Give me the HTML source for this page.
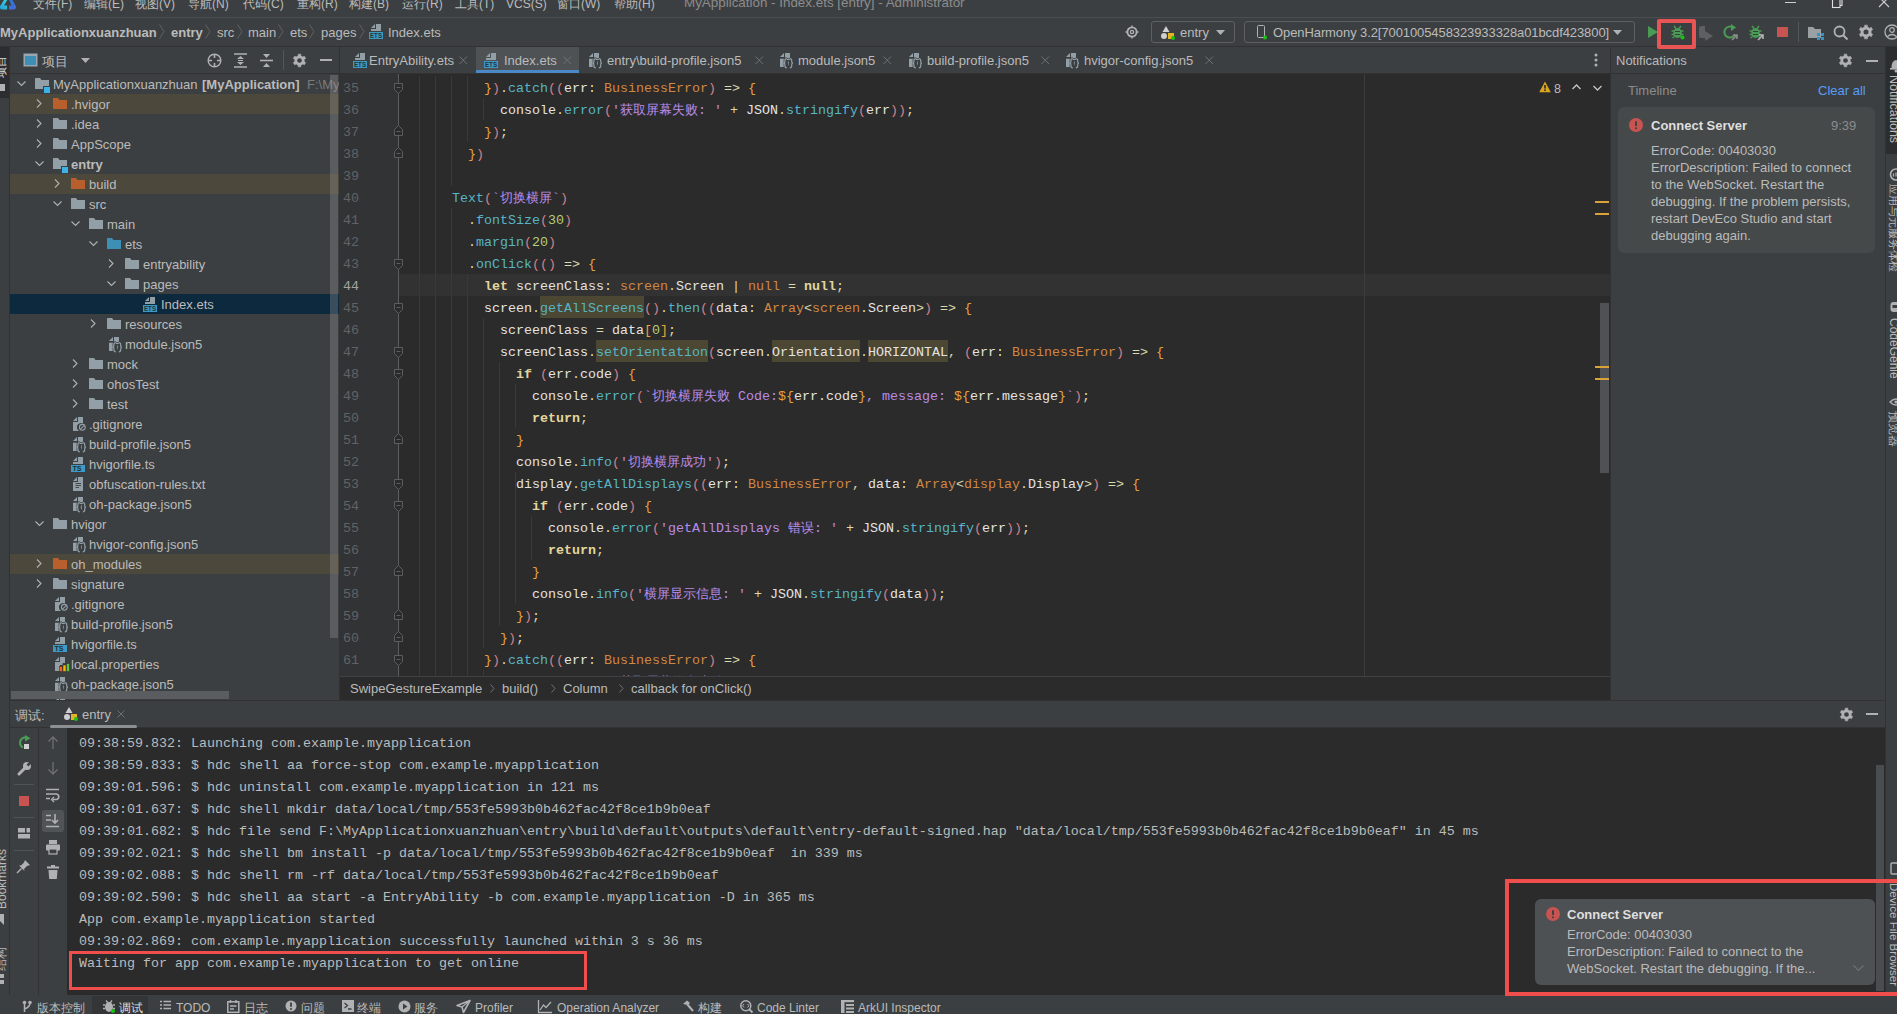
<!DOCTYPE html>
<html><head><meta charset="utf-8"><style>
*{box-sizing:border-box;margin:0;padding:0}
html,body{width:1897px;height:1014px;overflow:hidden;background:#3c3f41;font-family:"Liberation Sans",sans-serif;font-size:13px;color:#bbbbbb}
.a{position:absolute}
.t{position:absolute;white-space:pre;line-height:16px;height:16px}
.m{font-family:"Liberation Mono",monospace;font-size:13.33px}
.cj{display:inline-block;overflow:hidden;white-space:nowrap;vertical-align:top}
svg{position:absolute;overflow:visible}
.id{color:#e3e3e3}.kw{color:#e2d59c;font-weight:bold}.ty{color:#cf8744}.fn{color:#58b4c6}.st{color:#b98be9}.nu{color:#b3ce7a}.br{color:#e8a33c}.pa{color:#d2808c}.op{color:#ded8aa}
.hl{background:#4b4733;padding:5px 0 2px}
</style></head><body>
<div class="a" style="left:0px;top:0px;width:1897px;height:17px;background:#3c3f41"></div>
<div class="a" style="left:0px;top:17px;width:1897px;height:1px;background:#4b4e50"></div>
<div class="a" style="left:0px;top:18px;width:1897px;height:28px;background:#3c3f41"></div>
<div class="a" style="left:0px;top:46px;width:1897px;height:1px;background:#323232"></div>
<div class="a" style="left:0px;top:47px;width:9px;height:948px;background:#3c3f41"></div>
<div class="a" style="left:9px;top:47px;width:1px;height:948px;background:#2f3133"></div>
<div class="a" style="left:10px;top:47px;width:329px;height:653px;background:#3c3f41"></div>
<div class="a" style="left:10px;top:73px;width:329px;height:1px;background:#323232"></div>
<div class="a" style="left:339px;top:47px;width:1px;height:653px;background:#323232"></div>
<div class="a" style="left:340px;top:47px;width:1270px;height:26px;background:#3c3f41"></div>
<div class="a" style="left:340px;top:73px;width:1270px;height:1px;background:#323232"></div>
<div class="a" style="left:340px;top:74px;width:1270px;height:602px;background:#2b2b2b"></div>
<div class="a" style="left:1610px;top:47px;width:1px;height:653px;background:#323232"></div>
<div class="a" style="left:1611px;top:47px;width:274px;height:653px;background:#3c3f41"></div>
<div class="a" style="left:10px;top:700px;width:1875px;height:1px;background:#323232"></div>
<div class="a" style="left:10px;top:701px;width:1875px;height:26px;background:#3c3f41"></div>
<div class="a" style="left:10px;top:727px;width:1875px;height:1px;background:#323232"></div>
<div class="a" style="left:10px;top:728px;width:57px;height:267px;background:#3c3f41"></div>
<div class="a" style="left:67px;top:728px;width:1818px;height:267px;background:#2b2b2b"></div>
<div class="a" style="left:0px;top:995px;width:1897px;height:19px;background:#3c3f41"></div>
<div class="t" style="left:33px;top:-4px;color:#bbbbbb;font-size:12px">文件(F)</div>
<div class="t" style="left:84px;top:-4px;color:#bbbbbb;font-size:12px">编辑(E)</div>
<div class="t" style="left:135px;top:-4px;color:#bbbbbb;font-size:12px">视图(V)</div>
<div class="t" style="left:188px;top:-4px;color:#bbbbbb;font-size:12px">导航(N)</div>
<div class="t" style="left:243px;top:-4px;color:#bbbbbb;font-size:12px">代码(C)</div>
<div class="t" style="left:297px;top:-4px;color:#bbbbbb;font-size:12px">重构(R)</div>
<div class="t" style="left:349px;top:-4px;color:#bbbbbb;font-size:12px">构建(B)</div>
<div class="t" style="left:402px;top:-4px;color:#bbbbbb;font-size:12px">运行(R)</div>
<div class="t" style="left:455px;top:-4px;color:#bbbbbb;font-size:12px">工具(T)</div>
<div class="t" style="left:506px;top:-4px;color:#bbbbbb;font-size:12px">VCS(S)</div>
<div class="t" style="left:557px;top:-4px;color:#bbbbbb;font-size:12px">窗口(W)</div>
<div class="t" style="left:614px;top:-4px;color:#bbbbbb;font-size:12px">帮助(H)</div>
<div class="t" style="left:684px;top:-5px;color:#8c8c8c;font-size:13.4px">MyApplication - Index.ets [entry] - Administrator</div>
<svg style="left:0px;top:0px;" width="18" height="12" viewBox="0 0 18 12"><defs><linearGradient id="lg1" x1="0" y1="1" x2="0.6" y2="0"><stop offset="0" stop-color="#1ea0d8"/><stop offset="1" stop-color="#3ccbe0"/></linearGradient><linearGradient id="lg2" x1="0" y1="0" x2="1" y2="1"><stop offset="0" stop-color="#2a78d0"/><stop offset="1" stop-color="#4a68d8"/></linearGradient></defs><path d="M-0.5 7 L4.6 -1 H7.8 L4.1 5.6 H7.1 V9.6 H2 Q0.3 9.6 -0.5 7 Z" fill="url(#lg1)"/><path d="M8.7 -1 H11.8 L15.9 6.3 Q16.3 8.2 15.2 9 Q14.6 9.6 13.6 9.6 H9 V5.6 H11.6 Z" fill="url(#lg2)"/></svg>
<div class="a" style="left:1785px;top:2px;width:11px;height:1px;background:#cfcfcf"></div>
<svg style="left:1830px;top:-3px;" width="14" height="12" viewBox="0 0 14 12"><rect x="2.5" y="1.5" width="7.5" height="9" fill="none" stroke="#e0e0e0" stroke-width="1.1"/><path d="M4.5 1.5 V-0.5 H12 V8.5 H10" fill="none" stroke="#e0e0e0" stroke-width="1.1"/></svg>
<svg style="left:1878px;top:-3px;" width="14" height="12" viewBox="0 0 14 12"><path d="M1 0 L11 10 M11 0 L1 10" stroke="#cfcfcf" stroke-width="1.1"/></svg>
<div class="t" style="left:0px;top:25px;font-weight:bold;color:#bbbbbb">MyApplicationxuanzhuan</div>
<div class="t" style="left:171px;top:25px;font-weight:bold;color:#bbbbbb">entry</div>
<div class="t" style="left:217px;top:25px;color:#bbbbbb">src</div>
<div class="t" style="left:248px;top:25px;color:#bbbbbb">main</div>
<div class="t" style="left:290px;top:25px;color:#bbbbbb">ets</div>
<div class="t" style="left:321px;top:25px;color:#bbbbbb">pages</div>
<div class="t" style="left:388px;top:25px;color:#bbbbbb">Index.ets</div>
<svg style="left:159px;top:24px;" width="6" height="16" viewBox="0 0 6 16"><path d="M0.5 0.5 L5 7.5 L0.5 14.5" stroke="#5f6163" fill="none"/></svg>
<svg style="left:205px;top:24px;" width="6" height="16" viewBox="0 0 6 16"><path d="M0.5 0.5 L5 7.5 L0.5 14.5" stroke="#5f6163" fill="none"/></svg>
<svg style="left:237px;top:24px;" width="6" height="16" viewBox="0 0 6 16"><path d="M0.5 0.5 L5 7.5 L0.5 14.5" stroke="#5f6163" fill="none"/></svg>
<svg style="left:278px;top:24px;" width="6" height="16" viewBox="0 0 6 16"><path d="M0.5 0.5 L5 7.5 L0.5 14.5" stroke="#5f6163" fill="none"/></svg>
<svg style="left:309px;top:24px;" width="6" height="16" viewBox="0 0 6 16"><path d="M0.5 0.5 L5 7.5 L0.5 14.5" stroke="#5f6163" fill="none"/></svg>
<svg style="left:359px;top:24px;" width="6" height="16" viewBox="0 0 6 16"><path d="M0.5 0.5 L5 7.5 L0.5 14.5" stroke="#5f6163" fill="none"/></svg>
<svg style="left:371px;top:24px;" width="14" height="16" viewBox="0 0 14 16"><path d="M0 4 L4 0 V4 Z" fill="#929fa7"/><path d="M5 0 H10 V7 H0 V5 H5 Z" fill="#929fa7"/><rect x="-2" y="8" width="14" height="7" fill="#3d9ac4"/><text x="5" y="14" font-family="Liberation Sans" font-size="6.5" font-weight="bold" fill="#25323a" text-anchor="middle" textLength="12" lengthAdjust="spacingAndGlyphs">ETS</text></svg>
<svg style="left:1125px;top:25px;" width="15" height="15" viewBox="0 0 15 15"><circle cx="7" cy="7" r="4.6" fill="none" stroke="#afb1b3" stroke-width="1.8"/><circle cx="7" cy="7" r="1.6" fill="none" stroke="#afb1b3" stroke-width="1.3"/><path d="M7 0.5 V2.5 M7 11.5 V13.5 M0.5 7 H2.5 M11.5 7 H13.5" stroke="#afb1b3" stroke-width="1.4"/></svg>
<div class="a" style="left:1151px;top:21px;width:84px;height:22px;border:1px solid #5e6060;border-radius:3px"></div>
<svg style="left:1160px;top:25px;" width="18" height="16" viewBox="0 0 18 16"><path d="M6 1 L9.5 7 H2.5 Z" fill="#cfcfcf"/><circle cx="4" cy="11" r="3" fill="#cfcfcf"/><rect x="8" y="8" width="6" height="6" fill="#e6b422"/><circle cx="13" cy="13" r="2" fill="#16c60c"/></svg>
<div class="t" style="left:1180px;top:25px;color:#bbbbbb">entry</div>
<svg style="left:1216px;top:30px;" width="10" height="6" viewBox="0 0 10 6"><path d="M0 0 H9 L4.5 5 Z" fill="#afb1b3"/></svg>
<div class="a" style="left:1244px;top:21px;width:391px;height:22px;border:1px solid #5e6060;border-radius:3px"></div>
<svg style="left:1256px;top:25px;" width="12" height="15" viewBox="0 0 12 15"><rect x="1.5" y="0.5" width="7" height="12" rx="1" fill="none" stroke="#afb1b3"/><circle cx="9" cy="12.5" r="2" fill="#16c60c"/></svg>
<div class="t" style="left:1273px;top:25px;color:#bbbbbb;letter-spacing:-0.09px">OpenHarmony 3.2[7001005458323933328a01bcdf423800]</div>
<svg style="left:1613px;top:30px;" width="10" height="6" viewBox="0 0 10 6"><path d="M0 0 H9 L4.5 5 Z" fill="#afb1b3"/></svg>
<svg style="left:1647px;top:25px;" width="12" height="14" viewBox="0 0 12 14"><path d="M1 1 L11 7 L1 13 Z" fill="#499c54"/></svg>
<div class="a" style="left:1657px;top:19px;width:39px;height:30px;border:4px solid #e95454;border-radius:2px"></div>
<svg style="left:1671px;top:25px;" width="16" height="16" viewBox="0 0 16 16"><ellipse cx="6.5" cy="8" rx="4.3" ry="5" fill="#499c54"/><path d="M3 1 L5 3.5 M10 1 L8 3.5 M0.5 6 H3 M0.5 9.5 H3 M10 6 H12.5 M10 9.5 H12.5 M1.5 13 L3.5 11.5 M11.5 13 L9.5 11.5" stroke="#499c54" stroke-width="1.4"/><path d="M4 6.5 H9 M4 9.5 H9" stroke="#3c3f41" stroke-width="1"/><circle cx="11.5" cy="12.5" r="2" fill="#16c60c"/></svg>
<svg style="left:1697px;top:25px;" width="17" height="16" viewBox="0 0 17 16"><path d="M2 3 Q2 1 5 1 H8 V13 H5 Q2 13 2 11 Z" fill="#5d5f61"/><path d="M8 6 L16 11 L8 16 Z" fill="#5d5f61"/></svg>
<svg style="left:1722px;top:24px;" width="17" height="17" viewBox="0 0 17 17"><path d="M11 3.5 A5.5 5.5 0 1 0 12.5 11" fill="none" stroke="#499c54" stroke-width="2"/><path d="M9 0 L14 3.5 L9 7 Z" fill="#499c54"/><path d="M10 16 L15 11 M11 11 H15 V15" stroke="#8c8c8c" stroke-width="1.6" fill="none"/></svg>
<svg style="left:1749px;top:25px;" width="16" height="16" viewBox="0 0 16 16"><ellipse cx="6.5" cy="8" rx="4.3" ry="5" fill="#499c54"/><path d="M3 1 L5 3.5 M10 1 L8 3.5 M0.5 6 H3 M0.5 9.5 H3 M10 6 H12.5 M10 9.5 H12.5 M1.5 13 L3.5 11.5 M11.5 13 L9.5 11.5" stroke="#499c54" stroke-width="1.4"/><path d="M4 6.5 H9 M4 9.5 H9" stroke="#3c3f41" stroke-width="1"/><path d="M9 15 L14 10 M10 10 H14 V14" stroke="#afb1b3" stroke-width="1.6" fill="none"/></svg>
<div class="a" style="left:1777px;top:27px;width:11px;height:10px;background:#c75450"></div>
<div class="a" style="left:1798px;top:22px;width:1px;height:20px;background:#555759"></div>
<svg style="left:1807px;top:25px;" width="17" height="15" viewBox="0 0 17 15"><path d="M1 2 H6 L8 4 H14 V13 H1 Z" fill="#9aa0a4"/><rect x="10" y="8" width="3" height="3" fill="#3592c4"/><rect x="14" y="8" width="3" height="3" fill="#3592c4"/><rect x="10" y="12" width="3" height="3" fill="#3592c4"/><rect x="14" y="12" width="3" height="3" fill="#3592c4"/></svg>
<svg style="left:1833px;top:25px;" width="16" height="16" viewBox="0 0 16 16"><circle cx="6.5" cy="6.5" r="5" fill="none" stroke="#afb1b3" stroke-width="1.8"/><path d="M10 10 L14.5 14.5" stroke="#afb1b3" stroke-width="2"/></svg>
<svg style="left:1859px;top:25px;" width="14" height="14" viewBox="0 0 14 14"><polygon points="4.43,2.50 5.62,2.01 5.61,0.14 8.39,0.14 8.38,2.01 9.61,2.52 10.63,3.31 12.25,2.37 13.64,4.77 12.01,5.70 12.18,7.02 12.01,8.30 13.64,9.23 12.25,11.63 10.63,10.69 9.57,11.50 8.38,11.99 8.39,13.86 5.61,13.86 5.62,11.99 4.39,11.48 3.37,10.69 1.75,11.63 0.36,9.23 1.99,8.30 1.82,6.98 1.99,5.70 0.36,4.77 1.75,2.37 3.37,3.31" fill="#afb1b3" stroke="#afb1b3" stroke-width="0.6" stroke-linejoin="round"/><circle cx="7.0" cy="7.0" r="2.52" fill="#3c3f41"/></svg>
<svg style="left:1884px;top:24px;" width="16" height="16" viewBox="0 0 16 16"><circle cx="8" cy="8" r="7" fill="none" stroke="#afb1b3" stroke-width="1.3"/><circle cx="8" cy="6" r="2.3" fill="none" stroke="#afb1b3" stroke-width="1.2"/><path d="M3.5 12.5 Q8 8.5 12.5 12.5" fill="none" stroke="#afb1b3" stroke-width="1.2"/></svg>
<svg style="left:23px;top:53px;" width="15" height="14" viewBox="0 0 15 14"><rect x="0.5" y="0.5" width="14" height="13" fill="#9aa7b0"/><rect x="2" y="3" width="11" height="9" fill="#3d8fb5"/></svg>
<div class="t" style="left:42px;top:54px;color:#bbbbbb">项目</div>
<svg style="left:81px;top:58px;" width="10" height="6" viewBox="0 0 10 6"><path d="M0 0 H9 L4.5 5 Z" fill="#afb1b3"/></svg>
<svg style="left:207px;top:53px;" width="15" height="15" viewBox="0 0 15 15"><circle cx="7.5" cy="7.5" r="6.3" fill="none" stroke="#afb1b3" stroke-width="1.4"/><path d="M7.5 1 V5 M7.5 10 V14 M1 7.5 H5 M10 7.5 H14" stroke="#afb1b3" stroke-width="1.6"/></svg>
<svg style="left:234px;top:53px;" width="13" height="15" viewBox="0 0 13 15"><path d="M0 1 H13 M0 14 H13" stroke="#afb1b3" stroke-width="1.6"/><path d="M3 6 L6.5 3 L10 6 Z M3 9 L6.5 12 L10 9 Z" fill="#afb1b3"/><path d="M4 7.5 H9" stroke="#afb1b3"/></svg>
<svg style="left:260px;top:53px;" width="13" height="15" viewBox="0 0 13 15"><path d="M0 7.5 H13" stroke="#afb1b3" stroke-width="1.6"/><path d="M3 1 L6.5 5 L10 1 Z M3 14 L6.5 10 L10 14 Z" fill="#afb1b3"/></svg>
<div class="a" style="left:283px;top:50px;width:1px;height:20px;background:#555759"></div>
<svg style="left:293px;top:54px;" width="13" height="13" viewBox="0 0 13 13"><polygon points="4.11,2.33 5.22,1.86 5.21,0.13 7.79,0.13 7.78,1.86 8.92,2.34 9.87,3.07 11.37,2.20 12.66,4.43 11.16,5.29 11.31,6.52 11.16,7.71 12.66,8.57 11.37,10.80 9.87,9.93 8.89,10.67 7.78,11.14 7.79,12.87 5.21,12.87 5.22,11.14 4.08,10.66 3.13,9.93 1.63,10.80 0.34,8.57 1.84,7.71 1.69,6.48 1.84,5.29 0.34,4.43 1.63,2.20 3.13,3.07" fill="#afb1b3" stroke="#afb1b3" stroke-width="0.6" stroke-linejoin="round"/><circle cx="6.5" cy="6.5" r="2.34" fill="#3c3f41"/></svg>
<div class="a" style="left:320px;top:59px;width:12px;height:2px;background:#afb1b3"></div>
<div class="a" style="left:0;top:0;width:339px;height:700px;overflow:hidden">
<svg style="left:17px;top:79px;" width="10" height="10" viewBox="0 0 10 10"><path d="M0.5 2.5 L4.5 6.5 L8.5 2.5" fill="none" stroke="#afb1b3" stroke-width="1.1"/></svg>
<svg style="left:35px;top:78px;" width="16" height="16" viewBox="0 0 16 16"><path d="M0 0.5 Q0 0 0.5 0 H5 L6.5 2 H14 V8 H8 V11 H0 Z" fill="#929fa7"/><rect x="9" y="9" width="6" height="6" fill="#3cb2e6"/></svg>
<div class="t" style="left:53px;top:77px;color:#bbbbbb">MyApplicationxuanzhuan</div>
<div class="t" style="left:202px;top:77px;color:#bbbbbb;font-weight:bold">[MyApplication]</div>
<div class="t" style="left:307px;top:77px;color:#7b7b7b">F:\MyApplicationxuanzhuan</div>
<div class="a" style="left:10px;top:94px;width:329px;height:20px;background:#4d483c"></div>
<svg style="left:35px;top:99px;" width="10" height="10" viewBox="0 0 10 10"><path d="M2 0.5 L6 4.5 L2 8.5" fill="none" stroke="#afb1b3" stroke-width="1.1"/></svg>
<svg style="left:53px;top:98px;" width="16" height="16" viewBox="0 0 16 16"><path d="M0 0.5 Q0 0 0.5 0 H5 L6.5 2 H14 V11 H0 Z" fill="#b95f2e"/></svg>
<div class="t" style="left:71px;top:97px;color:#bbbbbb">.hvigor</div>
<svg style="left:35px;top:119px;" width="10" height="10" viewBox="0 0 10 10"><path d="M2 0.5 L6 4.5 L2 8.5" fill="none" stroke="#afb1b3" stroke-width="1.1"/></svg>
<svg style="left:53px;top:118px;" width="16" height="16" viewBox="0 0 16 16"><path d="M0 0.5 Q0 0 0.5 0 H5 L6.5 2 H14 V11 H0 Z" fill="#929fa7"/></svg>
<div class="t" style="left:71px;top:117px;color:#bbbbbb">.idea</div>
<svg style="left:35px;top:139px;" width="10" height="10" viewBox="0 0 10 10"><path d="M2 0.5 L6 4.5 L2 8.5" fill="none" stroke="#afb1b3" stroke-width="1.1"/></svg>
<svg style="left:53px;top:138px;" width="16" height="16" viewBox="0 0 16 16"><path d="M0 0.5 Q0 0 0.5 0 H5 L6.5 2 H14 V11 H0 Z" fill="#929fa7"/></svg>
<div class="t" style="left:71px;top:137px;color:#bbbbbb">AppScope</div>
<svg style="left:35px;top:159px;" width="10" height="10" viewBox="0 0 10 10"><path d="M0.5 2.5 L4.5 6.5 L8.5 2.5" fill="none" stroke="#afb1b3" stroke-width="1.1"/></svg>
<svg style="left:53px;top:158px;" width="16" height="16" viewBox="0 0 16 16"><path d="M0 0.5 Q0 0 0.5 0 H5 L6.5 2 H14 V8 H8 V11 H0 Z" fill="#929fa7"/><rect x="9" y="9" width="6" height="6" fill="#3cb2e6"/></svg>
<div class="t" style="left:71px;top:157px;color:#bbbbbb;font-weight:bold">entry</div>
<div class="a" style="left:10px;top:174px;width:329px;height:20px;background:#4d483c"></div>
<svg style="left:53px;top:179px;" width="10" height="10" viewBox="0 0 10 10"><path d="M2 0.5 L6 4.5 L2 8.5" fill="none" stroke="#afb1b3" stroke-width="1.1"/></svg>
<svg style="left:71px;top:178px;" width="16" height="16" viewBox="0 0 16 16"><path d="M0 0.5 Q0 0 0.5 0 H5 L6.5 2 H14 V11 H0 Z" fill="#b95f2e"/></svg>
<div class="t" style="left:89px;top:177px;color:#bbbbbb">build</div>
<svg style="left:53px;top:199px;" width="10" height="10" viewBox="0 0 10 10"><path d="M0.5 2.5 L4.5 6.5 L8.5 2.5" fill="none" stroke="#afb1b3" stroke-width="1.1"/></svg>
<svg style="left:71px;top:198px;" width="16" height="16" viewBox="0 0 16 16"><path d="M0 0.5 Q0 0 0.5 0 H5 L6.5 2 H14 V11 H0 Z" fill="#929fa7"/></svg>
<div class="t" style="left:89px;top:197px;color:#bbbbbb">src</div>
<svg style="left:71px;top:219px;" width="10" height="10" viewBox="0 0 10 10"><path d="M0.5 2.5 L4.5 6.5 L8.5 2.5" fill="none" stroke="#afb1b3" stroke-width="1.1"/></svg>
<svg style="left:89px;top:218px;" width="16" height="16" viewBox="0 0 16 16"><path d="M0 0.5 Q0 0 0.5 0 H5 L6.5 2 H14 V11 H0 Z" fill="#929fa7"/></svg>
<div class="t" style="left:107px;top:217px;color:#bbbbbb">main</div>
<svg style="left:89px;top:239px;" width="10" height="10" viewBox="0 0 10 10"><path d="M0.5 2.5 L4.5 6.5 L8.5 2.5" fill="none" stroke="#afb1b3" stroke-width="1.1"/></svg>
<svg style="left:107px;top:238px;" width="16" height="16" viewBox="0 0 16 16"><path d="M0 0.5 Q0 0 0.5 0 H5 L6.5 2 H14 V11 H0 Z" fill="#3d8fb5"/></svg>
<div class="t" style="left:125px;top:237px;color:#bbbbbb">ets</div>
<svg style="left:107px;top:259px;" width="10" height="10" viewBox="0 0 10 10"><path d="M2 0.5 L6 4.5 L2 8.5" fill="none" stroke="#afb1b3" stroke-width="1.1"/></svg>
<svg style="left:125px;top:258px;" width="16" height="16" viewBox="0 0 16 16"><path d="M0 0.5 Q0 0 0.5 0 H5 L6.5 2 H14 V11 H0 Z" fill="#929fa7"/></svg>
<div class="t" style="left:143px;top:257px;color:#bbbbbb">entryability</div>
<svg style="left:107px;top:279px;" width="10" height="10" viewBox="0 0 10 10"><path d="M0.5 2.5 L4.5 6.5 L8.5 2.5" fill="none" stroke="#afb1b3" stroke-width="1.1"/></svg>
<svg style="left:125px;top:278px;" width="16" height="16" viewBox="0 0 16 16"><path d="M0 0.5 Q0 0 0.5 0 H5 L6.5 2 H14 V11 H0 Z" fill="#929fa7"/></svg>
<div class="t" style="left:143px;top:277px;color:#bbbbbb">pages</div>
<div class="a" style="left:10px;top:294px;width:329px;height:20px;background:#0d293e"></div>
<svg style="left:145px;top:297px;" width="14" height="16" viewBox="0 0 14 16"><path d="M0 4 L4 0 V4 Z" fill="#929fa7"/><path d="M5 0 H10 V7 H0 V5 H5 Z" fill="#929fa7"/><rect x="-2" y="8" width="14" height="7" fill="#3d9ac4"/><text x="5" y="14" font-family="Liberation Sans" font-size="6.5" font-weight="bold" fill="#25323a" text-anchor="middle" textLength="12" lengthAdjust="spacingAndGlyphs">ETS</text></svg>
<div class="t" style="left:161px;top:297px;color:#bbbbbb">Index.ets</div>
<svg style="left:89px;top:319px;" width="10" height="10" viewBox="0 0 10 10"><path d="M2 0.5 L6 4.5 L2 8.5" fill="none" stroke="#afb1b3" stroke-width="1.1"/></svg>
<svg style="left:107px;top:318px;" width="16" height="16" viewBox="0 0 16 16"><path d="M0 0.5 Q0 0 0.5 0 H5 L6.5 2 H14 V11 H0 Z" fill="#929fa7"/></svg>
<div class="t" style="left:125px;top:317px;color:#bbbbbb">resources</div>
<svg style="left:109px;top:337px;" width="14" height="16" viewBox="0 0 14 16"><path d="M0 4 L4 0 V4 Z" fill="#929fa7"/><path d="M5 0 H10 V5 H5 Z M0 5.8 H10 V14 H0 Z" fill="#929fa7"/><path d="M6.8 5.6 Q4.9 5.6 4.9 7.6 V8.7 Q4.9 10.2 3.6 10.2 Q4.9 10.2 4.9 11.7 V12.8 Q4.9 14.8 6.8 14.8 M9.8 5.6 Q11.7 5.6 11.7 7.6 V8.7 Q11.7 10.2 13 10.2 Q11.7 10.2 11.7 11.7 V12.8 Q11.7 14.8 9.8 14.8 M3.6 10.2 H5" fill="none" stroke="#3c3f41" stroke-width="2.6"/><path d="M6 7 H10.6 V14 H6 Z" fill="#3c3f41"/><path d="M6.8 5.6 Q4.9 5.6 4.9 7.6 V8.7 Q4.9 10.2 3.6 10.2 Q4.9 10.2 4.9 11.7 V12.8 Q4.9 14.8 6.8 14.8 M9.8 5.6 Q11.7 5.6 11.7 7.6 V8.7 Q11.7 10.2 13 10.2 Q11.7 10.2 11.7 11.7 V12.8 Q11.7 14.8 9.8 14.8" fill="none" stroke="#929fa7" stroke-width="1.2"/><path d="M8.3 7.2 Q7.3 10.2 8.3 13.2 Q9.3 10.2 8.3 7.2 Z" fill="#929fa7"/></svg>
<div class="t" style="left:125px;top:337px;color:#bbbbbb">module.json5</div>
<svg style="left:71px;top:359px;" width="10" height="10" viewBox="0 0 10 10"><path d="M2 0.5 L6 4.5 L2 8.5" fill="none" stroke="#afb1b3" stroke-width="1.1"/></svg>
<svg style="left:89px;top:358px;" width="16" height="16" viewBox="0 0 16 16"><path d="M0 0.5 Q0 0 0.5 0 H5 L6.5 2 H14 V11 H0 Z" fill="#929fa7"/></svg>
<div class="t" style="left:107px;top:357px;color:#bbbbbb">mock</div>
<svg style="left:71px;top:379px;" width="10" height="10" viewBox="0 0 10 10"><path d="M2 0.5 L6 4.5 L2 8.5" fill="none" stroke="#afb1b3" stroke-width="1.1"/></svg>
<svg style="left:89px;top:378px;" width="16" height="16" viewBox="0 0 16 16"><path d="M0 0.5 Q0 0 0.5 0 H5 L6.5 2 H14 V11 H0 Z" fill="#929fa7"/></svg>
<div class="t" style="left:107px;top:377px;color:#bbbbbb">ohosTest</div>
<svg style="left:71px;top:399px;" width="10" height="10" viewBox="0 0 10 10"><path d="M2 0.5 L6 4.5 L2 8.5" fill="none" stroke="#afb1b3" stroke-width="1.1"/></svg>
<svg style="left:89px;top:398px;" width="16" height="16" viewBox="0 0 16 16"><path d="M0 0.5 Q0 0 0.5 0 H5 L6.5 2 H14 V11 H0 Z" fill="#929fa7"/></svg>
<div class="t" style="left:107px;top:397px;color:#bbbbbb">test</div>
<svg style="left:73px;top:417px;" width="14" height="16" viewBox="0 0 14 16"><path d="M0 4 L4 0 V4 Z" fill="#929fa7"/><path d="M5 0 H10 V6.5 A3.6 3.6 0 0 0 6.2 14 H0 V5 H5 Z" fill="#929fa7"/><circle cx="9.3" cy="10.3" r="2.9" fill="none" stroke="#929fa7" stroke-width="1.1"/><path d="M7.3 12.3 L11.3 8.3" stroke="#929fa7" stroke-width="1.1"/></svg>
<div class="t" style="left:89px;top:417px;color:#bbbbbb">.gitignore</div>
<svg style="left:73px;top:437px;" width="14" height="16" viewBox="0 0 14 16"><path d="M0 4 L4 0 V4 Z" fill="#929fa7"/><path d="M5 0 H10 V5 H5 Z M0 5.8 H10 V14 H0 Z" fill="#929fa7"/><path d="M6.8 5.6 Q4.9 5.6 4.9 7.6 V8.7 Q4.9 10.2 3.6 10.2 Q4.9 10.2 4.9 11.7 V12.8 Q4.9 14.8 6.8 14.8 M9.8 5.6 Q11.7 5.6 11.7 7.6 V8.7 Q11.7 10.2 13 10.2 Q11.7 10.2 11.7 11.7 V12.8 Q11.7 14.8 9.8 14.8 M3.6 10.2 H5" fill="none" stroke="#3c3f41" stroke-width="2.6"/><path d="M6 7 H10.6 V14 H6 Z" fill="#3c3f41"/><path d="M6.8 5.6 Q4.9 5.6 4.9 7.6 V8.7 Q4.9 10.2 3.6 10.2 Q4.9 10.2 4.9 11.7 V12.8 Q4.9 14.8 6.8 14.8 M9.8 5.6 Q11.7 5.6 11.7 7.6 V8.7 Q11.7 10.2 13 10.2 Q11.7 10.2 11.7 11.7 V12.8 Q11.7 14.8 9.8 14.8" fill="none" stroke="#929fa7" stroke-width="1.2"/><path d="M8.3 7.2 Q7.3 10.2 8.3 13.2 Q9.3 10.2 8.3 7.2 Z" fill="#929fa7"/></svg>
<div class="t" style="left:89px;top:437px;color:#bbbbbb">build-profile.json5</div>
<svg style="left:73px;top:457px;" width="14" height="16" viewBox="0 0 14 16"><path d="M0 4 L4 0 V4 Z" fill="#929fa7"/><path d="M5 0 H10 V7 H0 V5 H5 Z" fill="#929fa7"/><rect x="-2" y="8" width="14" height="7" fill="#3d9ac4"/><text x="-0.5" y="14" font-family="Liberation Sans" font-size="7" font-weight="bold" fill="#1f2f38">TS</text></svg>
<div class="t" style="left:89px;top:457px;color:#bbbbbb">hvigorfile.ts</div>
<svg style="left:73px;top:477px;" width="14" height="16" viewBox="0 0 14 16"><path d="M0 4 L4 0 V4 Z" fill="#929fa7"/><path d="M5 0 H10 V14 H0 V5 H5 Z" fill="#929fa7"/><path d="M2.5 6.5 H8 M2.5 8.5 H8 M2.5 10.5 H6" stroke="#3c3f41" stroke-width="0.9"/></svg>
<div class="t" style="left:89px;top:477px;color:#bbbbbb">obfuscation-rules.txt</div>
<svg style="left:73px;top:497px;" width="14" height="16" viewBox="0 0 14 16"><path d="M0 4 L4 0 V4 Z" fill="#929fa7"/><path d="M5 0 H10 V5 H5 Z M0 5.8 H10 V14 H0 Z" fill="#929fa7"/><path d="M6.8 5.6 Q4.9 5.6 4.9 7.6 V8.7 Q4.9 10.2 3.6 10.2 Q4.9 10.2 4.9 11.7 V12.8 Q4.9 14.8 6.8 14.8 M9.8 5.6 Q11.7 5.6 11.7 7.6 V8.7 Q11.7 10.2 13 10.2 Q11.7 10.2 11.7 11.7 V12.8 Q11.7 14.8 9.8 14.8 M3.6 10.2 H5" fill="none" stroke="#3c3f41" stroke-width="2.6"/><path d="M6 7 H10.6 V14 H6 Z" fill="#3c3f41"/><path d="M6.8 5.6 Q4.9 5.6 4.9 7.6 V8.7 Q4.9 10.2 3.6 10.2 Q4.9 10.2 4.9 11.7 V12.8 Q4.9 14.8 6.8 14.8 M9.8 5.6 Q11.7 5.6 11.7 7.6 V8.7 Q11.7 10.2 13 10.2 Q11.7 10.2 11.7 11.7 V12.8 Q11.7 14.8 9.8 14.8" fill="none" stroke="#929fa7" stroke-width="1.2"/><path d="M8.3 7.2 Q7.3 10.2 8.3 13.2 Q9.3 10.2 8.3 7.2 Z" fill="#929fa7"/></svg>
<div class="t" style="left:89px;top:497px;color:#bbbbbb">oh-package.json5</div>
<svg style="left:35px;top:519px;" width="10" height="10" viewBox="0 0 10 10"><path d="M0.5 2.5 L4.5 6.5 L8.5 2.5" fill="none" stroke="#afb1b3" stroke-width="1.1"/></svg>
<svg style="left:53px;top:518px;" width="16" height="16" viewBox="0 0 16 16"><path d="M0 0.5 Q0 0 0.5 0 H5 L6.5 2 H14 V11 H0 Z" fill="#929fa7"/></svg>
<div class="t" style="left:71px;top:517px;color:#bbbbbb">hvigor</div>
<svg style="left:73px;top:537px;" width="14" height="16" viewBox="0 0 14 16"><path d="M0 4 L4 0 V4 Z" fill="#929fa7"/><path d="M5 0 H10 V5 H5 Z M0 5.8 H10 V14 H0 Z" fill="#929fa7"/><path d="M6.8 5.6 Q4.9 5.6 4.9 7.6 V8.7 Q4.9 10.2 3.6 10.2 Q4.9 10.2 4.9 11.7 V12.8 Q4.9 14.8 6.8 14.8 M9.8 5.6 Q11.7 5.6 11.7 7.6 V8.7 Q11.7 10.2 13 10.2 Q11.7 10.2 11.7 11.7 V12.8 Q11.7 14.8 9.8 14.8 M3.6 10.2 H5" fill="none" stroke="#3c3f41" stroke-width="2.6"/><path d="M6 7 H10.6 V14 H6 Z" fill="#3c3f41"/><path d="M6.8 5.6 Q4.9 5.6 4.9 7.6 V8.7 Q4.9 10.2 3.6 10.2 Q4.9 10.2 4.9 11.7 V12.8 Q4.9 14.8 6.8 14.8 M9.8 5.6 Q11.7 5.6 11.7 7.6 V8.7 Q11.7 10.2 13 10.2 Q11.7 10.2 11.7 11.7 V12.8 Q11.7 14.8 9.8 14.8" fill="none" stroke="#929fa7" stroke-width="1.2"/><path d="M8.3 7.2 Q7.3 10.2 8.3 13.2 Q9.3 10.2 8.3 7.2 Z" fill="#929fa7"/></svg>
<div class="t" style="left:89px;top:537px;color:#bbbbbb">hvigor-config.json5</div>
<div class="a" style="left:10px;top:554px;width:329px;height:20px;background:#4d483c"></div>
<svg style="left:35px;top:559px;" width="10" height="10" viewBox="0 0 10 10"><path d="M2 0.5 L6 4.5 L2 8.5" fill="none" stroke="#afb1b3" stroke-width="1.1"/></svg>
<svg style="left:53px;top:558px;" width="16" height="16" viewBox="0 0 16 16"><path d="M0 0.5 Q0 0 0.5 0 H5 L6.5 2 H14 V11 H0 Z" fill="#b95f2e"/></svg>
<div class="t" style="left:71px;top:557px;color:#bbbbbb">oh_modules</div>
<svg style="left:35px;top:579px;" width="10" height="10" viewBox="0 0 10 10"><path d="M2 0.5 L6 4.5 L2 8.5" fill="none" stroke="#afb1b3" stroke-width="1.1"/></svg>
<svg style="left:53px;top:578px;" width="16" height="16" viewBox="0 0 16 16"><path d="M0 0.5 Q0 0 0.5 0 H5 L6.5 2 H14 V11 H0 Z" fill="#929fa7"/></svg>
<div class="t" style="left:71px;top:577px;color:#bbbbbb">signature</div>
<svg style="left:55px;top:597px;" width="14" height="16" viewBox="0 0 14 16"><path d="M0 4 L4 0 V4 Z" fill="#929fa7"/><path d="M5 0 H10 V6.5 A3.6 3.6 0 0 0 6.2 14 H0 V5 H5 Z" fill="#929fa7"/><circle cx="9.3" cy="10.3" r="2.9" fill="none" stroke="#929fa7" stroke-width="1.1"/><path d="M7.3 12.3 L11.3 8.3" stroke="#929fa7" stroke-width="1.1"/></svg>
<div class="t" style="left:71px;top:597px;color:#bbbbbb">.gitignore</div>
<svg style="left:55px;top:617px;" width="14" height="16" viewBox="0 0 14 16"><path d="M0 4 L4 0 V4 Z" fill="#929fa7"/><path d="M5 0 H10 V5 H5 Z M0 5.8 H10 V14 H0 Z" fill="#929fa7"/><path d="M6.8 5.6 Q4.9 5.6 4.9 7.6 V8.7 Q4.9 10.2 3.6 10.2 Q4.9 10.2 4.9 11.7 V12.8 Q4.9 14.8 6.8 14.8 M9.8 5.6 Q11.7 5.6 11.7 7.6 V8.7 Q11.7 10.2 13 10.2 Q11.7 10.2 11.7 11.7 V12.8 Q11.7 14.8 9.8 14.8 M3.6 10.2 H5" fill="none" stroke="#3c3f41" stroke-width="2.6"/><path d="M6 7 H10.6 V14 H6 Z" fill="#3c3f41"/><path d="M6.8 5.6 Q4.9 5.6 4.9 7.6 V8.7 Q4.9 10.2 3.6 10.2 Q4.9 10.2 4.9 11.7 V12.8 Q4.9 14.8 6.8 14.8 M9.8 5.6 Q11.7 5.6 11.7 7.6 V8.7 Q11.7 10.2 13 10.2 Q11.7 10.2 11.7 11.7 V12.8 Q11.7 14.8 9.8 14.8" fill="none" stroke="#929fa7" stroke-width="1.2"/><path d="M8.3 7.2 Q7.3 10.2 8.3 13.2 Q9.3 10.2 8.3 7.2 Z" fill="#929fa7"/></svg>
<div class="t" style="left:71px;top:617px;color:#bbbbbb">build-profile.json5</div>
<svg style="left:55px;top:637px;" width="14" height="16" viewBox="0 0 14 16"><path d="M0 4 L4 0 V4 Z" fill="#929fa7"/><path d="M5 0 H10 V7 H0 V5 H5 Z" fill="#929fa7"/><rect x="-2" y="8" width="14" height="7" fill="#3d9ac4"/><text x="-0.5" y="14" font-family="Liberation Sans" font-size="7" font-weight="bold" fill="#1f2f38">TS</text></svg>
<div class="t" style="left:71px;top:637px;color:#bbbbbb">hvigorfile.ts</div>
<svg style="left:55px;top:657px;" width="14" height="16" viewBox="0 0 14 16"><path d="M0 4 L4 0 V4 Z" fill="#929fa7"/><path d="M5 0 H10 V6 H7.5 V8 H5 V14 H0 V5 H5 Z" fill="#929fa7"/><rect x="4.5" y="9.5" width="3" height="5" fill="#f26522" stroke="#2b2b2b" stroke-width="0.5"/><rect x="8" y="8" width="3" height="6.5" fill="#f5b700" stroke="#2b2b2b" stroke-width="0.5"/><rect x="11.5" y="6.5" width="3" height="8" fill="#5ec545" stroke="#2b2b2b" stroke-width="0.5"/></svg>
<div class="t" style="left:71px;top:657px;color:#bbbbbb">local.properties</div>
<svg style="left:55px;top:677px;" width="14" height="16" viewBox="0 0 14 16"><path d="M0 4 L4 0 V4 Z" fill="#929fa7"/><path d="M5 0 H10 V5 H5 Z M0 5.8 H10 V14 H0 Z" fill="#929fa7"/><path d="M6.8 5.6 Q4.9 5.6 4.9 7.6 V8.7 Q4.9 10.2 3.6 10.2 Q4.9 10.2 4.9 11.7 V12.8 Q4.9 14.8 6.8 14.8 M9.8 5.6 Q11.7 5.6 11.7 7.6 V8.7 Q11.7 10.2 13 10.2 Q11.7 10.2 11.7 11.7 V12.8 Q11.7 14.8 9.8 14.8 M3.6 10.2 H5" fill="none" stroke="#3c3f41" stroke-width="2.6"/><path d="M6 7 H10.6 V14 H6 Z" fill="#3c3f41"/><path d="M6.8 5.6 Q4.9 5.6 4.9 7.6 V8.7 Q4.9 10.2 3.6 10.2 Q4.9 10.2 4.9 11.7 V12.8 Q4.9 14.8 6.8 14.8 M9.8 5.6 Q11.7 5.6 11.7 7.6 V8.7 Q11.7 10.2 13 10.2 Q11.7 10.2 11.7 11.7 V12.8 Q11.7 14.8 9.8 14.8" fill="none" stroke="#929fa7" stroke-width="1.2"/><path d="M8.3 7.2 Q7.3 10.2 8.3 13.2 Q9.3 10.2 8.3 7.2 Z" fill="#929fa7"/></svg>
<div class="t" style="left:71px;top:677px;color:#bbbbbb">oh-package.json5</div>
<svg style="left:55px;top:697px;" width="14" height="16" viewBox="0 0 14 16"><path d="M0 4 L4 0 V4 Z" fill="#929fa7"/><path d="M5 0 H10 V5 H5 Z M0 5.8 H10 V14 H0 Z" fill="#929fa7"/><path d="M6.8 5.6 Q4.9 5.6 4.9 7.6 V8.7 Q4.9 10.2 3.6 10.2 Q4.9 10.2 4.9 11.7 V12.8 Q4.9 14.8 6.8 14.8 M9.8 5.6 Q11.7 5.6 11.7 7.6 V8.7 Q11.7 10.2 13 10.2 Q11.7 10.2 11.7 11.7 V12.8 Q11.7 14.8 9.8 14.8 M3.6 10.2 H5" fill="none" stroke="#3c3f41" stroke-width="2.6"/><path d="M6 7 H10.6 V14 H6 Z" fill="#3c3f41"/><path d="M6.8 5.6 Q4.9 5.6 4.9 7.6 V8.7 Q4.9 10.2 3.6 10.2 Q4.9 10.2 4.9 11.7 V12.8 Q4.9 14.8 6.8 14.8 M9.8 5.6 Q11.7 5.6 11.7 7.6 V8.7 Q11.7 10.2 13 10.2 Q11.7 10.2 11.7 11.7 V12.8 Q11.7 14.8 9.8 14.8" fill="none" stroke="#929fa7" stroke-width="1.2"/><path d="M8.3 7.2 Q7.3 10.2 8.3 13.2 Q9.3 10.2 8.3 7.2 Z" fill="#929fa7"/></svg>
<div class="t" style="left:71px;top:697px;color:#bbbbbb">oh-package-lock.json5</div>
</div>
<div class="a" style="left:330px;top:75px;width:8px;height:563px;background:rgba(154,154,154,0.32)"></div>
<div class="a" style="left:11px;top:691px;width:218px;height:8px;background:#5a5d5f"></div>
<svg style="left:355px;top:53px;" width="14" height="16" viewBox="0 0 14 16"><path d="M0 4 L4 0 V4 Z" fill="#929fa7"/><path d="M5 0 H10 V7 H0 V5 H5 Z" fill="#929fa7"/><rect x="-2" y="8" width="14" height="7" fill="#3d9ac4"/><text x="5" y="14" font-family="Liberation Sans" font-size="6.5" font-weight="bold" fill="#25323a" text-anchor="middle" textLength="12" lengthAdjust="spacingAndGlyphs">ETS</text></svg>
<div class="t" style="left:369px;top:53px;color:#bbbbbb">EntryAbility.ets</div>
<svg style="left:459px;top:56px;" width="9" height="9" viewBox="0 0 9 9"><path d="M0.5 0.5 L8 8 M8 0.5 L0.5 8" stroke="#6e7073" stroke-width="1"/></svg>
<div class="a" style="left:476px;top:47px;width:103px;height:26px;background:#4e5254"></div>
<div class="a" style="left:476px;top:70px;width:103px;height:3px;background:#4a88c7"></div>
<svg style="left:486px;top:53px;" width="14" height="16" viewBox="0 0 14 16"><path d="M0 4 L4 0 V4 Z" fill="#929fa7"/><path d="M5 0 H10 V7 H0 V5 H5 Z" fill="#929fa7"/><rect x="-2" y="8" width="14" height="7" fill="#3d9ac4"/><text x="5" y="14" font-family="Liberation Sans" font-size="6.5" font-weight="bold" fill="#25323a" text-anchor="middle" textLength="12" lengthAdjust="spacingAndGlyphs">ETS</text></svg>
<div class="t" style="left:504px;top:53px;color:#bbbbbb">Index.ets</div>
<svg style="left:563px;top:56px;" width="9" height="9" viewBox="0 0 9 9"><path d="M0.5 0.5 L8 8 M8 0.5 L0.5 8" stroke="#6e7073" stroke-width="1"/></svg>
<svg style="left:589px;top:53px;" width="14" height="16" viewBox="0 0 14 16"><path d="M0 4 L4 0 V4 Z" fill="#929fa7"/><path d="M5 0 H10 V5 H5 Z M0 5.8 H10 V14 H0 Z" fill="#929fa7"/><path d="M6.8 5.6 Q4.9 5.6 4.9 7.6 V8.7 Q4.9 10.2 3.6 10.2 Q4.9 10.2 4.9 11.7 V12.8 Q4.9 14.8 6.8 14.8 M9.8 5.6 Q11.7 5.6 11.7 7.6 V8.7 Q11.7 10.2 13 10.2 Q11.7 10.2 11.7 11.7 V12.8 Q11.7 14.8 9.8 14.8 M3.6 10.2 H5" fill="none" stroke="#3c3f41" stroke-width="2.6"/><path d="M6 7 H10.6 V14 H6 Z" fill="#3c3f41"/><path d="M6.8 5.6 Q4.9 5.6 4.9 7.6 V8.7 Q4.9 10.2 3.6 10.2 Q4.9 10.2 4.9 11.7 V12.8 Q4.9 14.8 6.8 14.8 M9.8 5.6 Q11.7 5.6 11.7 7.6 V8.7 Q11.7 10.2 13 10.2 Q11.7 10.2 11.7 11.7 V12.8 Q11.7 14.8 9.8 14.8" fill="none" stroke="#929fa7" stroke-width="1.2"/><path d="M8.3 7.2 Q7.3 10.2 8.3 13.2 Q9.3 10.2 8.3 7.2 Z" fill="#929fa7"/></svg>
<div class="t" style="left:607px;top:53px;color:#bbbbbb">entry\build-profile.json5</div>
<svg style="left:755px;top:56px;" width="9" height="9" viewBox="0 0 9 9"><path d="M0.5 0.5 L8 8 M8 0.5 L0.5 8" stroke="#6e7073" stroke-width="1"/></svg>
<svg style="left:780px;top:53px;" width="14" height="16" viewBox="0 0 14 16"><path d="M0 4 L4 0 V4 Z" fill="#929fa7"/><path d="M5 0 H10 V5 H5 Z M0 5.8 H10 V14 H0 Z" fill="#929fa7"/><path d="M6.8 5.6 Q4.9 5.6 4.9 7.6 V8.7 Q4.9 10.2 3.6 10.2 Q4.9 10.2 4.9 11.7 V12.8 Q4.9 14.8 6.8 14.8 M9.8 5.6 Q11.7 5.6 11.7 7.6 V8.7 Q11.7 10.2 13 10.2 Q11.7 10.2 11.7 11.7 V12.8 Q11.7 14.8 9.8 14.8 M3.6 10.2 H5" fill="none" stroke="#3c3f41" stroke-width="2.6"/><path d="M6 7 H10.6 V14 H6 Z" fill="#3c3f41"/><path d="M6.8 5.6 Q4.9 5.6 4.9 7.6 V8.7 Q4.9 10.2 3.6 10.2 Q4.9 10.2 4.9 11.7 V12.8 Q4.9 14.8 6.8 14.8 M9.8 5.6 Q11.7 5.6 11.7 7.6 V8.7 Q11.7 10.2 13 10.2 Q11.7 10.2 11.7 11.7 V12.8 Q11.7 14.8 9.8 14.8" fill="none" stroke="#929fa7" stroke-width="1.2"/><path d="M8.3 7.2 Q7.3 10.2 8.3 13.2 Q9.3 10.2 8.3 7.2 Z" fill="#929fa7"/></svg>
<div class="t" style="left:798px;top:53px;color:#bbbbbb">module.json5</div>
<svg style="left:883px;top:56px;" width="9" height="9" viewBox="0 0 9 9"><path d="M0.5 0.5 L8 8 M8 0.5 L0.5 8" stroke="#6e7073" stroke-width="1"/></svg>
<svg style="left:909px;top:53px;" width="14" height="16" viewBox="0 0 14 16"><path d="M0 4 L4 0 V4 Z" fill="#929fa7"/><path d="M5 0 H10 V5 H5 Z M0 5.8 H10 V14 H0 Z" fill="#929fa7"/><path d="M6.8 5.6 Q4.9 5.6 4.9 7.6 V8.7 Q4.9 10.2 3.6 10.2 Q4.9 10.2 4.9 11.7 V12.8 Q4.9 14.8 6.8 14.8 M9.8 5.6 Q11.7 5.6 11.7 7.6 V8.7 Q11.7 10.2 13 10.2 Q11.7 10.2 11.7 11.7 V12.8 Q11.7 14.8 9.8 14.8 M3.6 10.2 H5" fill="none" stroke="#3c3f41" stroke-width="2.6"/><path d="M6 7 H10.6 V14 H6 Z" fill="#3c3f41"/><path d="M6.8 5.6 Q4.9 5.6 4.9 7.6 V8.7 Q4.9 10.2 3.6 10.2 Q4.9 10.2 4.9 11.7 V12.8 Q4.9 14.8 6.8 14.8 M9.8 5.6 Q11.7 5.6 11.7 7.6 V8.7 Q11.7 10.2 13 10.2 Q11.7 10.2 11.7 11.7 V12.8 Q11.7 14.8 9.8 14.8" fill="none" stroke="#929fa7" stroke-width="1.2"/><path d="M8.3 7.2 Q7.3 10.2 8.3 13.2 Q9.3 10.2 8.3 7.2 Z" fill="#929fa7"/></svg>
<div class="t" style="left:927px;top:53px;color:#bbbbbb">build-profile.json5</div>
<svg style="left:1041px;top:56px;" width="9" height="9" viewBox="0 0 9 9"><path d="M0.5 0.5 L8 8 M8 0.5 L0.5 8" stroke="#6e7073" stroke-width="1"/></svg>
<svg style="left:1066px;top:53px;" width="14" height="16" viewBox="0 0 14 16"><path d="M0 4 L4 0 V4 Z" fill="#929fa7"/><path d="M5 0 H10 V5 H5 Z M0 5.8 H10 V14 H0 Z" fill="#929fa7"/><path d="M6.8 5.6 Q4.9 5.6 4.9 7.6 V8.7 Q4.9 10.2 3.6 10.2 Q4.9 10.2 4.9 11.7 V12.8 Q4.9 14.8 6.8 14.8 M9.8 5.6 Q11.7 5.6 11.7 7.6 V8.7 Q11.7 10.2 13 10.2 Q11.7 10.2 11.7 11.7 V12.8 Q11.7 14.8 9.8 14.8 M3.6 10.2 H5" fill="none" stroke="#3c3f41" stroke-width="2.6"/><path d="M6 7 H10.6 V14 H6 Z" fill="#3c3f41"/><path d="M6.8 5.6 Q4.9 5.6 4.9 7.6 V8.7 Q4.9 10.2 3.6 10.2 Q4.9 10.2 4.9 11.7 V12.8 Q4.9 14.8 6.8 14.8 M9.8 5.6 Q11.7 5.6 11.7 7.6 V8.7 Q11.7 10.2 13 10.2 Q11.7 10.2 11.7 11.7 V12.8 Q11.7 14.8 9.8 14.8" fill="none" stroke="#929fa7" stroke-width="1.2"/><path d="M8.3 7.2 Q7.3 10.2 8.3 13.2 Q9.3 10.2 8.3 7.2 Z" fill="#929fa7"/></svg>
<div class="t" style="left:1084px;top:53px;color:#bbbbbb">hvigor-config.json5</div>
<svg style="left:1205px;top:56px;" width="9" height="9" viewBox="0 0 9 9"><path d="M0.5 0.5 L8 8 M8 0.5 L0.5 8" stroke="#6e7073" stroke-width="1"/></svg>
<svg style="left:1594px;top:53px;" width="4" height="14" viewBox="0 0 4 14"><circle cx="2" cy="2" r="1.5" fill="#afb1b3"/><circle cx="2" cy="7" r="1.5" fill="#afb1b3"/><circle cx="2" cy="12" r="1.5" fill="#afb1b3"/></svg>
<div class="a" style="left:340px;top:74px;width:58px;height:602px;background:#313335"></div>
<div class="a" style="left:398px;top:274px;width:1212px;height:22px;background:#323232"></div>
<div class="a" style="left:340px;top:274px;width:58px;height:22px;background:#313335"></div>
<div class="a" style="left:1364px;top:74px;width:1px;height:602px;background:#3d3d3d"></div>
<div class="a" style="left:419px;top:76px;width:1px;height:616px;background:#393939"></div>
<div class="a" style="left:435px;top:76px;width:1px;height:616px;background:#393939"></div>
<div class="a" style="left:451px;top:76px;width:1px;height:110px;background:#393939"></div>
<div class="a" style="left:451px;top:208px;width:1px;height:484px;background:#393939"></div>
<div class="a" style="left:467px;top:76px;width:1px;height:66px;background:#393939"></div>
<div class="a" style="left:467px;top:274px;width:1px;height:418px;background:#393939"></div>
<div class="a" style="left:483px;top:98px;width:1px;height:22px;background:#393939"></div>
<div class="a" style="left:483px;top:318px;width:1px;height:330px;background:#393939"></div>
<div class="a" style="left:499px;top:362px;width:1px;height:264px;background:#393939"></div>
<div class="a" style="left:515px;top:384px;width:1px;height:44px;background:#393939"></div>
<div class="a" style="left:515px;top:472px;width:1px;height:132px;background:#393939"></div>
<div class="a" style="left:531px;top:516px;width:1px;height:44px;background:#393939"></div>
<div class="a" style="left:483px;top:670px;width:1px;height:22px;background:#393939"></div>
<div class="a" style="left:398px;top:74px;width:1px;height:602px;background:#5b5d5f"></div>
<div class="t m" style="left:340px;top:81px;width:19px;text-align:right;color:#606366">35</div>
<svg style="left:394px;top:83px;" width="9" height="11" viewBox="0 0 9 11"><path d="M0.5 0.5 H8.5 V6.5 L4.5 10.5 L0.5 6.5 Z" fill="#2b2b2b" stroke="#5b5d5f"/><path d="M2.5 4.5 H6.5" stroke="#5b5d5f"/></svg>
<div class="t m" style="left:404px;top:81px">          <span class="br">}</span><span class="pa">)</span><span class="op">.</span><span class="fn">catch</span><span class="pa">(</span><span class="pa">(</span><span class="id">err</span><span class="op">:</span> <span class="ty">BusinessError</span><span class="pa">)</span> <span class="op">=</span><span class="op">&gt;</span> <span class="br">{</span></div>
<div class="t m" style="left:340px;top:103px;width:19px;text-align:right;color:#606366">36</div>
<div class="t m" style="left:404px;top:103px">            <span class="id">console</span><span class="op">.</span><span class="fn">error</span><span class="pa">(</span><span class="st">'<span class="cj" style="width:78px">获取屏幕失败</span>: '</span> <span class="op">+</span> <span class="id">JSON</span><span class="op">.</span><span class="fn">stringify</span><span class="pa">(</span><span class="id">err</span><span class="pa">)</span><span class="pa">)</span><span class="op">;</span></div>
<div class="t m" style="left:340px;top:125px;width:19px;text-align:right;color:#606366">37</div>
<svg style="left:394px;top:125px;" width="9" height="11" viewBox="0 0 9 11"><path d="M0.5 10.5 H8.5 V4.5 L4.5 0.5 L0.5 4.5 Z" fill="#2b2b2b" stroke="#5b5d5f"/><path d="M2.5 6.5 H6.5" stroke="#5b5d5f"/></svg>
<div class="t m" style="left:404px;top:125px">          <span class="br">}</span><span class="pa">)</span><span class="op">;</span></div>
<div class="t m" style="left:340px;top:147px;width:19px;text-align:right;color:#606366">38</div>
<svg style="left:394px;top:147px;" width="9" height="11" viewBox="0 0 9 11"><path d="M0.5 10.5 H8.5 V4.5 L4.5 0.5 L0.5 4.5 Z" fill="#2b2b2b" stroke="#5b5d5f"/><path d="M2.5 6.5 H6.5" stroke="#5b5d5f"/></svg>
<div class="t m" style="left:404px;top:147px">        <span class="br">}</span><span class="pa">)</span></div>
<div class="t m" style="left:340px;top:169px;width:19px;text-align:right;color:#606366">39</div>
<div class="t m" style="left:340px;top:191px;width:19px;text-align:right;color:#606366">40</div>
<div class="t m" style="left:404px;top:191px">      <span class="fn">Text</span><span class="pa">(</span><span class="st">`<span class="cj" style="width:52px">切换横屏</span>`</span><span class="pa">)</span></div>
<div class="t m" style="left:340px;top:213px;width:19px;text-align:right;color:#606366">41</div>
<div class="t m" style="left:404px;top:213px">        <span class="op">.</span><span class="fn">fontSize</span><span class="pa">(</span><span class="nu">30</span><span class="pa">)</span></div>
<div class="t m" style="left:340px;top:235px;width:19px;text-align:right;color:#606366">42</div>
<div class="t m" style="left:404px;top:235px">        <span class="op">.</span><span class="fn">margin</span><span class="pa">(</span><span class="nu">20</span><span class="pa">)</span></div>
<div class="t m" style="left:340px;top:257px;width:19px;text-align:right;color:#606366">43</div>
<svg style="left:394px;top:259px;" width="9" height="11" viewBox="0 0 9 11"><path d="M0.5 0.5 H8.5 V6.5 L4.5 10.5 L0.5 6.5 Z" fill="#2b2b2b" stroke="#5b5d5f"/><path d="M2.5 4.5 H6.5" stroke="#5b5d5f"/></svg>
<div class="t m" style="left:404px;top:257px">        <span class="op">.</span><span class="fn">onClick</span><span class="pa">(</span><span class="pa">(</span><span class="pa">)</span> <span class="op">=</span><span class="op">&gt;</span> <span class="br">{</span></div>
<div class="t m" style="left:340px;top:279px;width:19px;text-align:right;color:#a4a3a3">44</div>
<div class="t m" style="left:404px;top:279px">          <span class="kw">let</span> <span class="id">screenClass</span><span class="op">:</span> <span class="ty">screen</span><span class="op">.</span><span class="id">Screen</span> <span class="op">|</span> <span class="ty">null</span> <span class="op">=</span> <span class="kw">null</span><span class="op">;</span></div>
<div class="t m" style="left:340px;top:301px;width:19px;text-align:right;color:#606366">45</div>
<svg style="left:394px;top:303px;" width="9" height="11" viewBox="0 0 9 11"><path d="M0.5 0.5 H8.5 V6.5 L4.5 10.5 L0.5 6.5 Z" fill="#2b2b2b" stroke="#5b5d5f"/><path d="M2.5 4.5 H6.5" stroke="#5b5d5f"/></svg>
<div class="t m" style="left:404px;top:301px">          <span class="id">screen</span><span class="op">.</span><span class="fn hl">getAllScreens</span><span class="pa">(</span><span class="pa">)</span><span class="op">.</span><span class="fn">then</span><span class="pa">(</span><span class="pa">(</span><span class="id">data</span><span class="op">:</span> <span class="ty">Array</span><span class="op">&lt;</span><span class="ty">screen</span><span class="op">.</span><span class="id">Screen</span><span class="op">&gt;</span><span class="pa">)</span> <span class="op">=</span><span class="op">&gt;</span> <span class="br">{</span></div>
<div class="t m" style="left:340px;top:323px;width:19px;text-align:right;color:#606366">46</div>
<div class="t m" style="left:404px;top:323px">            <span class="id">screenClass</span> <span class="op">=</span> <span class="id">data</span><span class="br">[</span><span class="nu">0</span><span class="br">]</span><span class="op">;</span></div>
<div class="t m" style="left:340px;top:345px;width:19px;text-align:right;color:#606366">47</div>
<svg style="left:394px;top:347px;" width="9" height="11" viewBox="0 0 9 11"><path d="M0.5 0.5 H8.5 V6.5 L4.5 10.5 L0.5 6.5 Z" fill="#2b2b2b" stroke="#5b5d5f"/><path d="M2.5 4.5 H6.5" stroke="#5b5d5f"/></svg>
<div class="t m" style="left:404px;top:345px">            <span class="id">screenClass</span><span class="op">.</span><span class="fn hl">setOrientation</span><span class="pa">(</span><span class="id">screen</span><span class="op">.</span><span class="id hl">Orientation</span><span class="op">.</span><span class="id hl">HORIZONTAL</span><span class="op">,</span> <span class="pa">(</span><span class="id">err</span><span class="op">:</span> <span class="ty">BusinessError</span><span class="pa">)</span> <span class="op">=</span><span class="op">&gt;</span> <span class="br">{</span></div>
<div class="t m" style="left:340px;top:367px;width:19px;text-align:right;color:#606366">48</div>
<svg style="left:394px;top:369px;" width="9" height="11" viewBox="0 0 9 11"><path d="M0.5 0.5 H8.5 V6.5 L4.5 10.5 L0.5 6.5 Z" fill="#2b2b2b" stroke="#5b5d5f"/><path d="M2.5 4.5 H6.5" stroke="#5b5d5f"/></svg>
<div class="t m" style="left:404px;top:367px">              <span class="kw">if</span> <span class="pa">(</span><span class="id">err</span><span class="op">.</span><span class="id">code</span><span class="pa">)</span> <span class="br">{</span></div>
<div class="t m" style="left:340px;top:389px;width:19px;text-align:right;color:#606366">49</div>
<div class="t m" style="left:404px;top:389px">                <span class="id">console</span><span class="op">.</span><span class="fn">error</span><span class="pa">(</span><span class="st">`<span class="cj" style="width:78px">切换横屏失败</span> Code:</span><span class="br">${</span><span class="id">err</span><span class="id">.</span><span class="id">code</span><span class="br">}</span><span class="st">, message: </span><span class="br">${</span><span class="id">err</span><span class="id">.</span><span class="id">message</span><span class="br">}</span><span class="st">`</span><span class="pa">)</span><span class="op">;</span></div>
<div class="t m" style="left:340px;top:411px;width:19px;text-align:right;color:#606366">50</div>
<div class="t m" style="left:404px;top:411px">                <span class="kw">return</span><span class="op">;</span></div>
<div class="t m" style="left:340px;top:433px;width:19px;text-align:right;color:#606366">51</div>
<svg style="left:394px;top:433px;" width="9" height="11" viewBox="0 0 9 11"><path d="M0.5 10.5 H8.5 V4.5 L4.5 0.5 L0.5 4.5 Z" fill="#2b2b2b" stroke="#5b5d5f"/><path d="M2.5 6.5 H6.5" stroke="#5b5d5f"/></svg>
<div class="t m" style="left:404px;top:433px">              <span class="br">}</span></div>
<div class="t m" style="left:340px;top:455px;width:19px;text-align:right;color:#606366">52</div>
<div class="t m" style="left:404px;top:455px">              <span class="id">console</span><span class="op">.</span><span class="fn">info</span><span class="pa">(</span><span class="st">'<span class="cj" style="width:78px">切换横屏成功</span>'</span><span class="pa">)</span><span class="op">;</span></div>
<div class="t m" style="left:340px;top:477px;width:19px;text-align:right;color:#606366">53</div>
<svg style="left:394px;top:479px;" width="9" height="11" viewBox="0 0 9 11"><path d="M0.5 0.5 H8.5 V6.5 L4.5 10.5 L0.5 6.5 Z" fill="#2b2b2b" stroke="#5b5d5f"/><path d="M2.5 4.5 H6.5" stroke="#5b5d5f"/></svg>
<div class="t m" style="left:404px;top:477px">              <span class="id">display</span><span class="op">.</span><span class="fn">getAllDisplays</span><span class="pa">(</span><span class="pa">(</span><span class="id">err</span><span class="op">:</span> <span class="ty">BusinessError</span><span class="op">,</span> <span class="id">data</span><span class="op">:</span> <span class="ty">Array</span><span class="op">&lt;</span><span class="ty">display</span><span class="op">.</span><span class="id">Display</span><span class="op">&gt;</span><span class="pa">)</span> <span class="op">=</span><span class="op">&gt;</span> <span class="br">{</span></div>
<div class="t m" style="left:340px;top:499px;width:19px;text-align:right;color:#606366">54</div>
<svg style="left:394px;top:501px;" width="9" height="11" viewBox="0 0 9 11"><path d="M0.5 0.5 H8.5 V6.5 L4.5 10.5 L0.5 6.5 Z" fill="#2b2b2b" stroke="#5b5d5f"/><path d="M2.5 4.5 H6.5" stroke="#5b5d5f"/></svg>
<div class="t m" style="left:404px;top:499px">                <span class="kw">if</span> <span class="pa">(</span><span class="id">err</span><span class="op">.</span><span class="id">code</span><span class="pa">)</span> <span class="br">{</span></div>
<div class="t m" style="left:340px;top:521px;width:19px;text-align:right;color:#606366">55</div>
<div class="t m" style="left:404px;top:521px">                  <span class="id">console</span><span class="op">.</span><span class="fn">error</span><span class="pa">(</span><span class="st">'getAllDisplays <span class="cj" style="width:26px">错误</span>: '</span> <span class="op">+</span> <span class="id">JSON</span><span class="op">.</span><span class="fn">stringify</span><span class="pa">(</span><span class="id">err</span><span class="pa">)</span><span class="pa">)</span><span class="op">;</span></div>
<div class="t m" style="left:340px;top:543px;width:19px;text-align:right;color:#606366">56</div>
<div class="t m" style="left:404px;top:543px">                  <span class="kw">return</span><span class="op">;</span></div>
<div class="t m" style="left:340px;top:565px;width:19px;text-align:right;color:#606366">57</div>
<svg style="left:394px;top:565px;" width="9" height="11" viewBox="0 0 9 11"><path d="M0.5 10.5 H8.5 V4.5 L4.5 0.5 L0.5 4.5 Z" fill="#2b2b2b" stroke="#5b5d5f"/><path d="M2.5 6.5 H6.5" stroke="#5b5d5f"/></svg>
<div class="t m" style="left:404px;top:565px">                <span class="br">}</span></div>
<div class="t m" style="left:340px;top:587px;width:19px;text-align:right;color:#606366">58</div>
<div class="t m" style="left:404px;top:587px">                <span class="id">console</span><span class="op">.</span><span class="fn">info</span><span class="pa">(</span><span class="st">'<span class="cj" style="width:78px">横屏显示信息</span>: '</span> <span class="op">+</span> <span class="id">JSON</span><span class="op">.</span><span class="fn">stringify</span><span class="pa">(</span><span class="id">data</span><span class="pa">)</span><span class="pa">)</span><span class="op">;</span></div>
<div class="t m" style="left:340px;top:609px;width:19px;text-align:right;color:#606366">59</div>
<svg style="left:394px;top:609px;" width="9" height="11" viewBox="0 0 9 11"><path d="M0.5 10.5 H8.5 V4.5 L4.5 0.5 L0.5 4.5 Z" fill="#2b2b2b" stroke="#5b5d5f"/><path d="M2.5 6.5 H6.5" stroke="#5b5d5f"/></svg>
<div class="t m" style="left:404px;top:609px">              <span class="br">}</span><span class="pa">)</span><span class="op">;</span></div>
<div class="t m" style="left:340px;top:631px;width:19px;text-align:right;color:#606366">60</div>
<svg style="left:394px;top:631px;" width="9" height="11" viewBox="0 0 9 11"><path d="M0.5 10.5 H8.5 V4.5 L4.5 0.5 L0.5 4.5 Z" fill="#2b2b2b" stroke="#5b5d5f"/><path d="M2.5 6.5 H6.5" stroke="#5b5d5f"/></svg>
<div class="t m" style="left:404px;top:631px">            <span class="br">}</span><span class="pa">)</span><span class="op">;</span></div>
<div class="t m" style="left:340px;top:653px;width:19px;text-align:right;color:#606366">61</div>
<svg style="left:394px;top:655px;" width="9" height="11" viewBox="0 0 9 11"><path d="M0.5 0.5 H8.5 V6.5 L4.5 10.5 L0.5 6.5 Z" fill="#2b2b2b" stroke="#5b5d5f"/><path d="M2.5 4.5 H6.5" stroke="#5b5d5f"/></svg>
<div class="t m" style="left:404px;top:653px">          <span class="br">}</span><span class="pa">)</span><span class="op">.</span><span class="fn">catch</span><span class="pa">(</span><span class="pa">(</span><span class="id">err</span><span class="op">:</span> <span class="ty">BusinessError</span><span class="pa">)</span> <span class="op">=</span><span class="op">&gt;</span> <span class="br">{</span></div>
<div class="t m" style="left:340px;top:675px;width:19px;text-align:right;color:#606366">62</div>
<div class="t m" style="left:404px;top:675px">            <span class="id">console</span><span class="op">.</span><span class="fn">error</span><span class="pa">(</span><span class="st">'<span class="cj" style="width:104px">获取屏幕信息失败</span>: '</span> <span class="op">+</span> <span class="id">JSON</span><span class="op">.</span><span class="fn">stringify</span><span class="pa">(</span><span class="id">err</span><span class="pa">)</span><span class="pa">)</span><span class="op">;</span></div>
<div class="a" style="left:340px;top:676px;width:1270px;height:1px;background:#3f4244"></div>
<div class="a" style="left:340px;top:677px;width:1270px;height:23px;background:#2b2b2b"></div>
<div class="t" style="left:350px;top:681px;color:#bbbbbb">SwipeGestureExample</div>
<div class="t" style="left:502px;top:681px;color:#bbbbbb">build()</div>
<div class="t" style="left:563px;top:681px;color:#bbbbbb">Column</div>
<div class="t" style="left:631px;top:681px;color:#bbbbbb">callback for onClick()</div>
<svg style="left:490px;top:684px;" width="5" height="9" viewBox="0 0 5 9"><path d="M0.5 0.5 L4 4.5 L0.5 8.5" fill="none" stroke="#6e7073"/></svg>
<svg style="left:551px;top:684px;" width="5" height="9" viewBox="0 0 5 9"><path d="M0.5 0.5 L4 4.5 L0.5 8.5" fill="none" stroke="#6e7073"/></svg>
<svg style="left:619px;top:684px;" width="5" height="9" viewBox="0 0 5 9"><path d="M0.5 0.5 L4 4.5 L0.5 8.5" fill="none" stroke="#6e7073"/></svg>
<svg style="left:1539px;top:81px;" width="12" height="12" viewBox="0 0 12 12"><path d="M6 0.5 L11.8 11.2 H0.2 Z" fill="#dba51f"/><rect x="5.2" y="4" width="1.6" height="3.6" fill="#2b2b2b"/><rect x="5.2" y="8.4" width="1.6" height="1.6" fill="#2b2b2b"/></svg>
<div class="t" style="left:1554px;top:81px;color:#bbbbbb;font-size:12.5px">8</div>
<svg style="left:1572px;top:84px;" width="9" height="6" viewBox="0 0 9 6"><path d="M0.5 5 L4.5 1 L8.5 5" fill="none" stroke="#c4c6c8" stroke-width="1.3"/></svg>
<svg style="left:1593px;top:85px;" width="9" height="6" viewBox="0 0 9 6"><path d="M0.5 1 L4.5 5 L8.5 1" fill="none" stroke="#c4c6c8" stroke-width="1.3"/></svg>
<div class="a" style="left:1600px;top:303px;width:9px;height:170px;background:#4f5254"></div>
<div class="a" style="left:1595px;top:201px;width:14px;height:2px;background:#d9a33a"></div>
<div class="a" style="left:1595px;top:213px;width:14px;height:2px;background:#d9a33a"></div>
<div class="a" style="left:1595px;top:366px;width:14px;height:2px;background:#d9a33a"></div>
<div class="a" style="left:1595px;top:378px;width:14px;height:2px;background:#d9a33a"></div>
<div class="a" style="left:1885px;top:47px;width:1px;height:948px;background:#323232"></div>
<div class="a" style="left:1886px;top:47px;width:11px;height:948px;background:#3c3f41"></div>
<div class="a" style="left:1886px;top:47px;width:11px;height:107px;background:#2b2d2f"></div>
<div class="t" style="left:1616px;top:53px;color:#bbbbbb">Notifications</div>
<svg style="left:1839px;top:54px;" width="13" height="13" viewBox="0 0 13 13"><polygon points="4.11,2.33 5.22,1.86 5.21,0.13 7.79,0.13 7.78,1.86 8.92,2.34 9.87,3.07 11.37,2.20 12.66,4.43 11.16,5.29 11.31,6.52 11.16,7.71 12.66,8.57 11.37,10.80 9.87,9.93 8.89,10.67 7.78,11.14 7.79,12.87 5.21,12.87 5.22,11.14 4.08,10.66 3.13,9.93 1.63,10.80 0.34,8.57 1.84,7.71 1.69,6.48 1.84,5.29 0.34,4.43 1.63,2.20 3.13,3.07" fill="#afb1b3" stroke="#afb1b3" stroke-width="0.6" stroke-linejoin="round"/><circle cx="6.5" cy="6.5" r="2.34" fill="#3c3f41"/></svg>
<div class="a" style="left:1866px;top:60px;width:12px;height:2px;background:#afb1b3"></div>
<div class="a" style="left:1611px;top:73px;width:274px;height:1px;background:#323232"></div>
<div class="t" style="left:1628px;top:83px;color:#8c8c8c">Timeline</div>
<div class="t" style="left:1818px;top:83px;color:#589df6">Clear all</div>
<div class="a" style="left:1618px;top:107px;width:257px;height:146px;background:#45494a;border-radius:6px"></div>
<svg style="left:1629px;top:118px;" width="14" height="14" viewBox="0 0 14 14"><circle cx="7" cy="7" r="7" fill="#c75450"/><path d="M7 3.2 V8" stroke="#3c3f41" stroke-width="1.8"/><rect x="6.1" y="9.4" width="1.8" height="1.8" fill="#3c3f41"/></svg>
<div class="t" style="left:1651px;top:118px;color:#dfdfdf;font-weight:bold">Connect Server</div>
<div class="t" style="left:1831px;top:118px;color:#8c8c8c">9:39</div>
<div class="t" style="left:1651px;top:143px;color:#bbbbbb">ErrorCode: 00403030</div>
<div class="t" style="left:1651px;top:160px;color:#bbbbbb">ErrorDescription: Failed to connect</div>
<div class="t" style="left:1651px;top:177px;color:#bbbbbb">to the WebSocket. Restart the</div>
<div class="t" style="left:1651px;top:194px;color:#bbbbbb">debugging. If the problem persists,</div>
<div class="t" style="left:1651px;top:211px;color:#bbbbbb">restart DevEco Studio and start</div>
<div class="t" style="left:1651px;top:228px;color:#bbbbbb">debugging again.</div>
<svg style="left:1890px;top:58px;" width="10" height="15" viewBox="0 0 10 15"><path d="M1.5 10 Q1.5 2.5 6 2 Q10.5 2.5 10.5 10 Z" fill="#afb1b3"/><rect x="0" y="10" width="12" height="1.6" fill="#afb1b3"/><circle cx="6" cy="13" r="1.5" fill="#afb1b3"/></svg>
<div class="t" style="left:1890px;top:75px;transform-origin:0 0;transform:rotate(90deg) translate(0,-12px);color:#bbbbbb;font-size:12.5px">Notifications</div>
<svg style="left:1889px;top:168px;" width="12" height="14" viewBox="0 0 12 14"><circle cx="7" cy="6.5" r="5.5" fill="none" stroke="#afb1b3" stroke-width="1.6"/><path d="M4.5 5.5 V8.5 M7 4.5 V8.5 M9.5 5.5 V8.5" stroke="#afb1b3" stroke-width="1.2"/></svg>
<div class="t" style="left:1890px;top:184px;transform-origin:0 0;transform:rotate(90deg) translate(0,-12px);color:#bbbbbb;font-size:11.3px">应用与元服务体检</div>
<svg style="left:1889px;top:301px;" width="12" height="12" viewBox="0 0 12 12"><rect x="1.5" y="1" width="10" height="10" rx="3" fill="#afb1b3"/><rect x="3.5" y="4" width="6" height="3" fill="#3c3f41"/></svg>
<div class="t" style="left:1890px;top:318px;transform-origin:0 0;transform:rotate(90deg) translate(0,-12px);color:#bbbbbb;font-size:12px">CodeGenie</div>
<svg style="left:1889px;top:397px;" width="12" height="10" viewBox="0 0 12 10"><path d="M1 5 Q7 -1 13 5 Q7 11 1 5 Z" fill="none" stroke="#afb1b3" stroke-width="1.3"/><circle cx="7" cy="5" r="1.6" fill="#afb1b3"/></svg>
<div class="t" style="left:1890px;top:411px;transform-origin:0 0;transform:rotate(90deg) translate(0,-12px);color:#bbbbbb;font-size:12px">预览器</div>
<svg style="left:1890px;top:862px;" width="10" height="13" viewBox="0 0 10 13"><rect x="1" y="1" width="10" height="11" rx="1" fill="none" stroke="#afb1b3" stroke-width="1.4"/></svg>
<div class="t" style="left:1890px;top:883px;transform-origin:0 0;transform:rotate(90deg) translate(0,-12px);color:#bbbbbb;font-size:11.6px">Device File Browser</div>
<div class="a" style="left:0px;top:47px;width:9px;height:51px;background:#2b2d2f"></div>
<div class="t" style="left:-7px;top:78px;transform-origin:0 0;transform:rotate(-90deg);color:#dfdfdf;font-size:11px">项目</div>
<div class="a" style="left:0px;top:84px;width:5px;height:7px;background:#afb1b3"></div>
<div class="t" style="left:-6px;top:909px;transform-origin:0 0;transform:rotate(-90deg);color:#bbbbbb;font-size:12px">Bookmarks</div>
<svg style="left:0px;top:914px;" width="5" height="12" viewBox="0 0 5 12"><path d="M0 0 H4 V11 L0 7 Z" fill="#afb1b3"/></svg>
<div class="t" style="left:-7px;top:971px;transform-origin:0 0;transform:rotate(-90deg);color:#bbbbbb;font-size:12px">结构</div>
<svg style="left:0px;top:974px;" width="5" height="10" viewBox="0 0 5 10"><rect x="0" y="0" width="4" height="4" fill="#afb1b3"/><rect x="0" y="6" width="4" height="4" fill="#afb1b3"/></svg>
<div class="t" style="left:15px;top:708px;color:#bbbbbb">调试:</div>
<svg style="left:63px;top:706px;" width="16" height="16" viewBox="0 0 16 16"><path d="M6 1 L9.5 7 H2.5 Z" fill="#cfcfcf"/><circle cx="4" cy="11" r="3" fill="#cfcfcf"/><rect x="8" y="8" width="6" height="6" fill="#e6b422"/><circle cx="13" cy="13" r="2" fill="#16c60c"/></svg>
<div class="t" style="left:82px;top:707px;color:#bbbbbb">entry</div>
<svg style="left:117px;top:710px;" width="8" height="8" viewBox="0 0 8 8"><path d="M0.5 0.5 L7.5 7.5 M7.5 0.5 L0.5 7.5" stroke="#6e7073"/></svg>
<div class="a" style="left:50px;top:725px;width:87px;height:3px;background:#8c9094;border-radius:2px"></div>
<svg style="left:1840px;top:708px;" width="13" height="13" viewBox="0 0 13 13"><polygon points="4.11,2.33 5.22,1.86 5.21,0.13 7.79,0.13 7.78,1.86 8.92,2.34 9.87,3.07 11.37,2.20 12.66,4.43 11.16,5.29 11.31,6.52 11.16,7.71 12.66,8.57 11.37,10.80 9.87,9.93 8.89,10.67 7.78,11.14 7.79,12.87 5.21,12.87 5.22,11.14 4.08,10.66 3.13,9.93 1.63,10.80 0.34,8.57 1.84,7.71 1.69,6.48 1.84,5.29 0.34,4.43 1.63,2.20 3.13,3.07" fill="#afb1b3" stroke="#afb1b3" stroke-width="0.6" stroke-linejoin="round"/><circle cx="6.5" cy="6.5" r="2.34" fill="#3c3f41"/></svg>
<div class="a" style="left:1866px;top:713px;width:12px;height:2px;background:#afb1b3"></div>
<div class="a" style="left:38px;top:728px;width:1px;height:267px;background:#323232"></div>
<svg style="left:17px;top:735px;" width="15" height="15" viewBox="0 0 15 15"><path d="M10.5 3 A5.2 5.2 0 1 0 6 12.5" fill="none" stroke="#499c54" stroke-width="2.2"/><path d="M8 0 L13.5 3.2 L8 6.5 Z" fill="#499c54"/><rect x="7" y="9" width="5" height="5" fill="#cfcfcf"/></svg>
<svg style="left:17px;top:761px;" width="15" height="15" viewBox="0 0 15 15"><path d="M2 13 L8 7" stroke="#afb1b3" stroke-width="3" stroke-linecap="round"/><circle cx="10" cy="5" r="4" fill="#afb1b3"/><path d="M10.5 4.5 L15 0" stroke="#3c3f41" stroke-width="2.5"/></svg>
<div class="a" style="left:14px;top:784px;width:20px;height:1px;background:#515456"></div>
<div class="a" style="left:19px;top:796px;width:10px;height:10px;background:#c75450"></div>
<div class="a" style="left:14px;top:817px;width:20px;height:1px;background:#515456"></div>
<svg style="left:18px;top:828px;" width="12" height="11" viewBox="0 0 12 11"><rect x="0" y="0" width="7" height="4.5" fill="#afb1b3"/><rect x="8.5" y="0" width="3.5" height="4.5" fill="#afb1b3"/><rect x="0" y="6" width="12" height="4.5" fill="#afb1b3"/></svg>
<div class="a" style="left:14px;top:850px;width:20px;height:1px;background:#515456"></div>
<svg style="left:16px;top:859px;" width="15" height="15" viewBox="0 0 15 15"><path d="M9 1 L14 6 L11 7 L8 10 L8.5 12 L3 6.5 L5 6.5 L8 3.5 Z" fill="#afb1b3"/><path d="M5.5 9.5 L1 14" stroke="#afb1b3" stroke-width="1.5"/></svg>
<svg style="left:47px;top:736px;" width="12" height="13" viewBox="0 0 12 13"><path d="M6 1 V13 M1.5 5.5 L6 1 L10.5 5.5" fill="none" stroke="#6e7073" stroke-width="1.3"/></svg>
<svg style="left:47px;top:762px;" width="12" height="13" viewBox="0 0 12 13"><path d="M6 0 V12 M1.5 7.5 L6 12 L10.5 7.5" fill="none" stroke="#6e7073" stroke-width="1.3"/></svg>
<svg style="left:46px;top:788px;" width="14" height="13" viewBox="0 0 14 13"><path d="M0 1.5 H13 M0 6 H10.5 A2.8 2.8 0 0 1 10.5 11.5 H7 M0 10.5 H4" fill="none" stroke="#afb1b3" stroke-width="1.6"/><path d="M8 9 L5.5 11.5 L8 14" fill="none" stroke="#afb1b3" stroke-width="1.3"/></svg>
<div class="a" style="left:42px;top:810px;width:22px;height:22px;background:#505456;border-radius:3px"></div>
<svg style="left:46px;top:814px;" width="14" height="14" viewBox="0 0 14 14"><path d="M0 1.5 H5 M0 6 H5 M0 12.5 H13 M9 0 V9 M6 6 L9 9 L12 6" fill="none" stroke="#afb1b3" stroke-width="1.6"/></svg>
<svg style="left:46px;top:840px;" width="14" height="14" viewBox="0 0 14 14"><rect x="3" y="0" width="8" height="4" fill="#afb1b3"/><rect x="0" y="4.5" width="14" height="6" rx="1" fill="#afb1b3"/><rect x="3" y="9" width="8" height="5" fill="#3c3f41" stroke="#afb1b3" stroke-width="1.2"/></svg>
<svg style="left:47px;top:865px;" width="12" height="14" viewBox="0 0 12 14"><rect x="0" y="1.5" width="12" height="2" fill="#afb1b3"/><rect x="4" y="0" width="4" height="2" fill="#afb1b3"/><path d="M1.5 5 H10.5 L9.8 14 H2.2 Z" fill="#afb1b3"/></svg>
<div class="t m" style="left:79px;top:736px;color:#bbbbbb">09:38:59.832: Launching com.example.myapplication</div>
<div class="t m" style="left:79px;top:758px;color:#bbbbbb">09:38:59.833: $ hdc shell aa force-stop com.example.myapplication</div>
<div class="t m" style="left:79px;top:780px;color:#bbbbbb">09:39:01.596: $ hdc uninstall com.example.myapplication in 121 ms</div>
<div class="t m" style="left:79px;top:802px;color:#bbbbbb">09:39:01.637: $ hdc shell mkdir data/local/tmp/553fe5993b0b462fac42f8ce1b9b0eaf</div>
<div class="t m" style="left:79px;top:824px;color:#bbbbbb">09:39:01.682: $ hdc file send F:\MyApplicationxuanzhuan\entry\build\default\outputs\default\entry-default-signed.hap "data/local/tmp/553fe5993b0b462fac42f8ce1b9b0eaf" in 45 ms</div>
<div class="t m" style="left:79px;top:846px;color:#bbbbbb">09:39:02.021: $ hdc shell bm install -p data/local/tmp/553fe5993b0b462fac42f8ce1b9b0eaf  in 339 ms</div>
<div class="t m" style="left:79px;top:868px;color:#bbbbbb">09:39:02.088: $ hdc shell rm -rf data/local/tmp/553fe5993b0b462fac42f8ce1b9b0eaf</div>
<div class="t m" style="left:79px;top:890px;color:#bbbbbb">09:39:02.590: $ hdc shell aa start -a EntryAbility -b com.example.myapplication -D in 365 ms</div>
<div class="t m" style="left:79px;top:912px;color:#bbbbbb">App com.example.myapplication started</div>
<div class="t m" style="left:79px;top:934px;color:#bbbbbb">09:39:02.869: com.example.myapplication successfully launched within 3 s 36 ms</div>
<div class="t m" style="left:79px;top:956px;color:#bbbbbb">Waiting for app com.example.myapplication to get online</div>
<div class="a" style="left:69px;top:951px;width:518px;height:39px;border:3px solid #f04d4d"></div>
<div class="a" style="left:1876px;top:765px;width:8px;height:226px;background:#4a4d4f"></div>
<div class="a" style="left:1505px;top:879px;width:400px;height:117px;border:4px solid #f04d4d"></div>
<div class="a" style="left:1535px;top:899px;width:340px;height:86px;background:#4e5154;border-radius:6px"></div>
<svg style="left:1546px;top:907px;" width="14" height="14" viewBox="0 0 14 14"><circle cx="7" cy="7" r="7" fill="#c75450"/><path d="M7 3.2 V8" stroke="#3c3f41" stroke-width="1.8"/><rect x="6.1" y="9.4" width="1.8" height="1.8" fill="#3c3f41"/></svg>
<div class="t" style="left:1567px;top:907px;color:#dfdfdf;font-weight:bold">Connect Server</div>
<div class="t" style="left:1567px;top:927px;color:#bbbbbb">ErrorCode: 00403030</div>
<div class="t" style="left:1567px;top:944px;color:#bbbbbb">ErrorDescription: Failed to connect to the</div>
<div class="t" style="left:1567px;top:961px;color:#bbbbbb">WebSocket. Restart the debugging. If the...</div>
<svg style="left:1853px;top:965px;" width="11" height="7" viewBox="0 0 11 7"><path d="M0.5 0.5 L5.5 5.5 L10.5 0.5" fill="none" stroke="#6e7073" stroke-width="1.2"/></svg>
<div class="a" style="left:92px;top:996px;width:56px;height:18px;background:#333537"></div>
<div class="t" style="left:37px;top:1000px;font-size:12px;color:#bbbbbb">版本控制</div>
<svg style="left:22px;top:1000px;" width="10" height="13" viewBox="0 0 10 13"><circle cx="2.5" cy="2.5" r="1.8" fill="#afb1b3"/><circle cx="8" cy="2.5" r="1.8" fill="#afb1b3"/><path d="M2.5 3 V12 M8 3 Q8 7 2.5 9" fill="none" stroke="#afb1b3" stroke-width="1.5"/></svg>
<div class="t" style="left:119px;top:1000px;font-size:12px;color:#dfdfdf">调试</div>
<svg style="left:103px;top:1000px;" width="13" height="13" viewBox="0 0 13 13"><ellipse cx="6" cy="7" rx="4" ry="5" fill="#afb1b3"/><path d="M3 0.5 L5 3 M9 0.5 L7 3 M0 5 H2 M0 8.5 H2 M10 5 H12 M10 8.5 H12" stroke="#afb1b3" stroke-width="1.3"/><circle cx="10" cy="11" r="2" fill="#16c60c"/></svg>
<div class="t" style="left:176px;top:1000px;font-size:12px;color:#bbbbbb">TODO</div>
<svg style="left:160px;top:1000px;" width="11" height="11" viewBox="0 0 11 11"><path d="M0 1.5 H2 M0 5 H2 M0 8.5 H2 M3.5 1.5 H11 M3.5 5 H11 M3.5 8.5 H11" stroke="#afb1b3" stroke-width="1.5"/></svg>
<div class="t" style="left:244px;top:1000px;font-size:12px;color:#bbbbbb">日志</div>
<svg style="left:227px;top:1000px;" width="13" height="13" viewBox="0 0 13 13"><rect x="0.8" y="1.8" width="11" height="10.5" fill="none" stroke="#afb1b3" stroke-width="1.5"/><path d="M3.5 0 V3 M9 0 V3 M3 6 H9.5 M3 9 H7" stroke="#afb1b3" stroke-width="1.4"/></svg>
<div class="t" style="left:301px;top:1000px;font-size:12px;color:#bbbbbb">问题</div>
<svg style="left:285px;top:1000px;" width="12" height="12" viewBox="0 0 12 12"><circle cx="6" cy="6" r="5.5" fill="#afb1b3"/><path d="M6 2.5 V6.8" stroke="#3c3f41" stroke-width="1.8"/><circle cx="6" cy="9" r="1" fill="#3c3f41"/></svg>
<div class="t" style="left:357px;top:1000px;font-size:12px;color:#bbbbbb">终端</div>
<svg style="left:342px;top:1000px;" width="12" height="12" viewBox="0 0 12 12"><rect x="0" y="0" width="12" height="12" fill="#afb1b3"/><path d="M2.5 3 L5.5 5.5 L2.5 8 M6 9 H9.5" fill="none" stroke="#3c3f41" stroke-width="1.3"/></svg>
<div class="t" style="left:414px;top:1000px;font-size:12px;color:#bbbbbb">服务</div>
<svg style="left:398px;top:1000px;" width="13" height="13" viewBox="0 0 13 13"><circle cx="6.5" cy="6.5" r="6" fill="#afb1b3"/><path d="M5 3.5 L9.5 6.5 L5 9.5 Z" fill="#3c3f41"/></svg>
<div class="t" style="left:475px;top:1000px;font-size:12px;color:#bbbbbb">Profiler</div>
<svg style="left:456px;top:1000px;" width="15" height="13" viewBox="0 0 15 13"><path d="M14 0.5 L1 5.5 L6 7 L7.5 12.5 Z" fill="none" stroke="#afb1b3" stroke-width="1.6" stroke-linejoin="round"/><path d="M6 7 L14 0.5" stroke="#afb1b3" stroke-width="1.2"/></svg>
<div class="t" style="left:557px;top:1000px;font-size:12px;color:#bbbbbb">Operation Analyzer</div>
<svg style="left:538px;top:1000px;" width="14" height="13" viewBox="0 0 14 13"><path d="M0.5 0 V12.5 H14 M2 10 L5.5 5 L8 7.5 L13 2" fill="none" stroke="#afb1b3" stroke-width="1.3"/></svg>
<div class="t" style="left:698px;top:1000px;font-size:12px;color:#bbbbbb">构建</div>
<svg style="left:681px;top:1000px;" width="13" height="13" viewBox="0 0 13 13"><path d="M2 4 L6 0.5 L9 3 L7 5 Z" fill="#afb1b3"/><path d="M6 4 L12 11" stroke="#afb1b3" stroke-width="2"/></svg>
<div class="t" style="left:757px;top:1000px;font-size:12px;color:#bbbbbb">Code Linter</div>
<svg style="left:740px;top:1000px;" width="13" height="14" viewBox="0 0 13 14"><circle cx="5.8" cy="5.8" r="5" fill="none" stroke="#afb1b3" stroke-width="1.5"/><path d="M9.5 9.5 L12.5 12.5" stroke="#afb1b3" stroke-width="2"/><path d="M4 4 L2.5 5.8 L4 7.5 M7.5 4 L9 5.8 L7.5 7.5" fill="none" stroke="#afb1b3" stroke-width="1"/></svg>
<div class="t" style="left:858px;top:1000px;font-size:12px;color:#bbbbbb">ArkUI Inspector</div>
<svg style="left:841px;top:1000px;" width="13" height="13" viewBox="0 0 13 13"><rect x="0" y="0" width="13" height="2.2" fill="#afb1b3"/><rect x="0" y="0" width="3.5" height="13" fill="#afb1b3"/><rect x="5" y="4" width="8" height="2" fill="#afb1b3"/><rect x="5" y="7.5" width="8" height="2" fill="#afb1b3"/><rect x="5" y="11" width="8" height="2" fill="#afb1b3"/></svg>
</body></html>
